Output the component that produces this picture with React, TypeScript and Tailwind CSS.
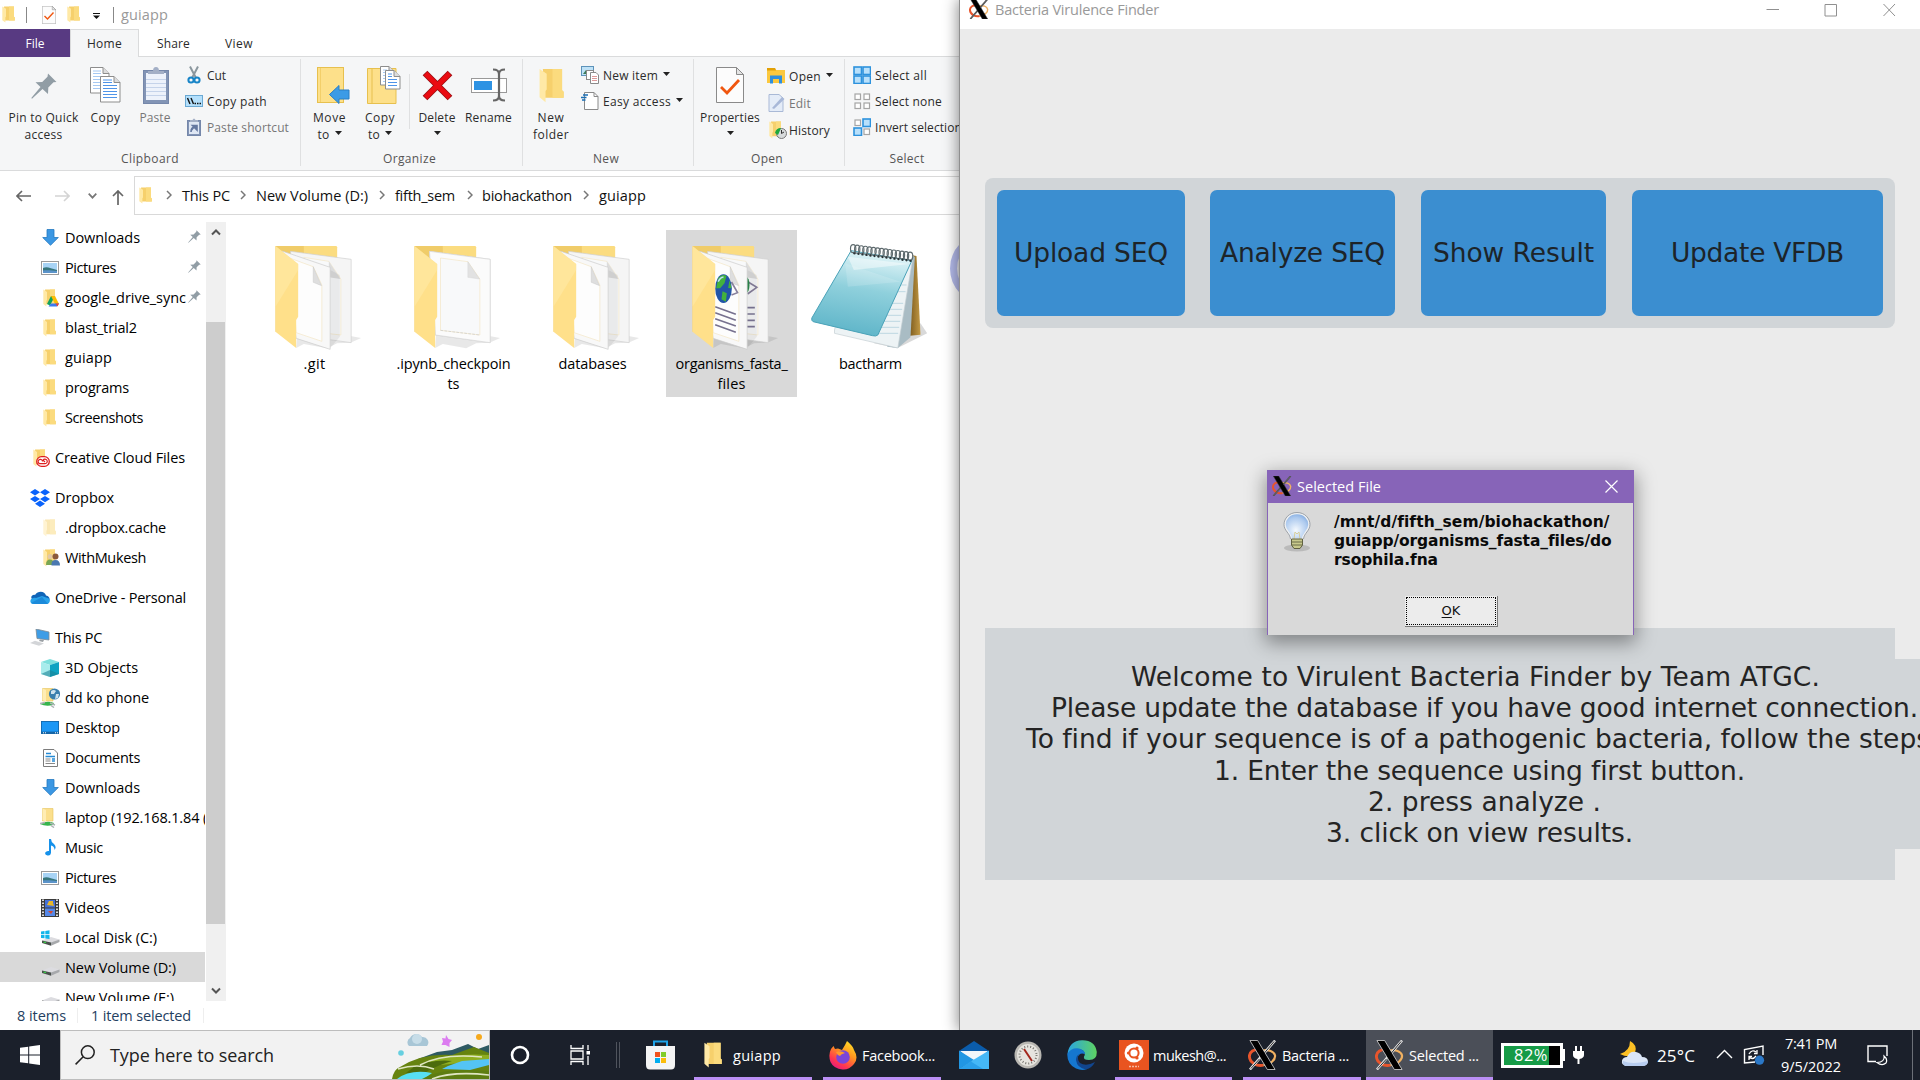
import { useLayoutEffect, useRef, useState, type ReactNode } from "react";

/* Text set to an exact advance width by adjusting its tracking. */
function T({ w, children, className = "" }: { w: number; children: string; className?: string }) {
  const ref = useRef<HTMLSpanElement>(null);
  const [ls, setLs] = useState(0);
  useLayoutEffect(() => {
    const el = ref.current;
    if (!el) return;
    const natural = el.getBoundingClientRect().width - ls * children.length;
    setLs((w - natural) / children.length);
  }, [w, children]);
  return (
    <span ref={ref} className={"inline-block shrink-0 whitespace-pre " + className} style={{ letterSpacing: ls + "px" }}>
      {children}
    </span>
  );
}

/* ---------- shared icons ---------- */
function Folder({ className = "w-[13px] h-[18px]" }: { className?: string }) {
  return (
    <svg viewBox="0 0 13 18" className={className} preserveAspectRatio="none">
      <path d="M2 0.5H12V11.5L12.8 12.2V15.3H3z" fill="#f6d06c" />
      <path d="M7 0.5H12V11.5L12.8 12.2V15.3H7z" fill="#fbdb7e" />
      <path d="M0.3 0.5L4 3V11l-.6.8V17.6L0.3 15z" fill="#ffe9a6" />
    </svg>
  );
}

function XLogo({ className, light = false }: { className: string; light?: boolean }) {
  return (
    <svg viewBox="0 0 30 30" className={className}>
      <path d="M14 10C6 8 1 12 1.500 17C2 23 9 27 16 25.500" fill="none" stroke="#e8552c" strokeWidth="3" />
      <path d="M16 25.500C23 25 28.500 20 28 15.500C27 11 21 9 15 10.500" fill="none" stroke="#f0b061" strokeWidth="2.200" />
      <path d="M28 0L2 30" stroke={light ? "#e4e4e4" : "#555"} strokeWidth="2.600" />
      <path d="M2 0H10L28 30H20z" fill="#000" stroke={light ? "#ddd" : "#333"} strokeWidth="0.800" />
      <path d="M27 1L17 13M12 19L3 29" stroke={light ? "#222" : "#666"} strokeWidth="1" />
    </svg>
  );
}

function Pin({ className }: { className: string }) {
  return (
    <svg viewBox="0 0 26 26" className={className}>
      <path d="M17 0.500L25.500 9L22.500 9.300L17.300 14.500L17 21L11.500 16L1 25.700L0.300 25L9.500 14L4.500 9.300L11.200 9L16.500 3.700z" fill="#919da5" />
    </svg>
  );
}

function Caret() {
  return <svg viewBox="0 0 7 4" className="w-[7px] h-[4px] shrink-0"><path d="M0 0H7L3.500 4z" fill="#222" /></svg>;
}

function Doc({ x = 0, y = 0, w = 19, h = 26, lines = "#4f94e8", faded = false }: { x?: number; y?: number; w?: number; h?: number; lines?: string; faded?: boolean }) {
  const rows = [];
  for (let i = 9; i < h - 2; i += 3) rows.push(i);
  return (
    <g transform={`translate(${x} ${y})`}>
      <path d={`M.5 .5H${w - 6}L${w} 6.500V${h}H.5z`} fill="#fff" stroke="#8d8d8d" />
      <path d={`M${w - 6} .5V6.500H${w}`} fill="#ddd" stroke="#8d8d8d" />
      <path d={`M3 4h${w - 11}M3 6.500h${w - 11}`} stroke={lines} opacity={faded ? 0.5 : 1} />
      {rows.map((r) => <path key={r} d={`M3 ${r + 0.5}h${w - 6}`} stroke={lines} opacity={faded ? 0.5 : 1} />)}
    </g>
  );
}

const PropsIcon = ({ className }: { className: string }) => (
  <svg viewBox="0 0 28 36" className={className}>
    <path d="M.5 .5H20.500L27.500 7.500V35.500H.5z" fill="#fcfcfc" stroke="#8a8a8a" />
    <path d="M20.500 .5V7.500H27.500z" fill="#e4e4e4" stroke="#8a8a8a" />
    <path d="M5 20L11 26L23 13" fill="none" stroke="#f0560f" strokeWidth="2.800" />
  </svg>
);

const Picture = () => (
  <svg viewBox="0 0 18 14" className="w-[18px] h-[14px]">
    <rect x=".5" y=".5" width="17" height="13" fill="#fff" stroke="#9a9a9a" />
    <rect x="2" y="2" width="14" height="10" fill="#a7d3f5" />
    <path d="M2 7C6 5 9 7 16 9V12H2z" fill="#37767c" /><path d="M2 9.500C6 9 12 9.500 16 10V12H2z" fill="#5b93c9" />
  </svg>
);
const DownArrow = () => (
  <svg viewBox="0 0 17 17" className="w-[17px] h-[17px]"><path d="M5 .5H12V8.500H16.300L8.500 16.300L.7 8.500H5z" fill="#3b97e3" stroke="#2479c0" strokeWidth=".8" /></svg>
);
const Cloud = () => (
  <svg viewBox="0 0 20 14" className="w-5 h-[14px]"><path d="M3 9C-1 6 3 3 5 4C8-1 15 0 16 4.500C20 5 20 9 19 10z" fill="#0f64b8" /><path d="M1 12C-1 9 2 6 6 7L12 5L19 7.500C21 10 19 13 17 13H4C2 13 1.500 12.500 1 12z" fill="#28a2ea" /><path d="M1 12L12 6L18 13H4z" fill="#1b8ada" /></svg>
);
const Drive = ({ win = false }: { win?: boolean }) => (
  <svg viewBox="0 0 19 16" className="w-[19px] h-4">
    <path d="M1 10.500L10 7L18.500 9.500L10 13.500z" fill="#dcdce0" /><path d="M1 10.500L10 12.500V15.700L1 13z" fill="#4a504c" /><path d="M10 12.500L18.500 9.500V12L10 15.700z" fill="#a7a9ac" /><path d="M2.500 12L5 12.600" stroke="#36d346" strokeWidth="1.200" />
    {win && <path d="M0 1.500L3.500 1V4.300H0zM4.300 .9L8.500 .2V4.300H4.300zM0 5.100H3.500V8.300L0 7.900zM4.300 5.100H8.500V9L4.300 8.400z" fill="#11b5ea" />}
  </svg>
);
const NetFolder = ({ globe = false }: { globe?: boolean }) => (
  <svg viewBox="0 0 20 20" className="w-5 h-5">
    <path d="M2.500 .5H13V13H2.500z" fill="#fbdf8c" stroke="#e6c35b" strokeWidth=".6" /><path d="M2.500 .5L6 2V14L2.500 12z" fill="#ffedb4" />
    {globe && <><circle cx="14.500" cy="6" r="5.600" fill="#3a7fae" /><path d="M11 3Q14 1 16 3L14 6L11 6zM16 6l3 0l-1 4l-3 1z" fill="#cfe3ee" /></>}
    <path d="M0 16Q7 12 14 15L13 17Q6 19 0 16z" fill="#36b54d" /><path d="M0 15.500l5 -1M11 17.500l3 2M10 15l5 2" stroke="#aeb3b5" strokeWidth="1.500" />
  </svg>
);

const sideIcons: Record<string, ReactNode> = {
  down: <DownArrow />,
  pic: <Picture />,
  folder: <Folder className="mr-[2px] w-[13px] h-[18px]" />,
  pale: <Folder className="mr-[2px] w-[13px] h-[18px] opacity-50" />,
  gdrive: (
    <div className="relative mr-[2px]"><Folder />
      <svg viewBox="0 0 12 11" className="absolute left-[4px] top-[7px] w-3 h-[11px]"><path d="M4 0H8L3 9.500L0 8z" fill="#11a35d" /><path d="M4 0H8L12 8H8z" fill="#fbbc05" /><path d="M1.500 10.500L4 7.500H12L10 10.500z" fill="#3a7af0" /><path d="M8.500 7.500H12L10.500 10.500z" fill="#ea4335" /></svg>
    </div>
  ),
  cc: (
    <div className="relative mr-[2px]"><Folder />
      <svg viewBox="0 0 14 11" className="absolute left-[3px] top-[7px] w-[14px] h-[11px]"><rect x=".7" y=".7" width="12.600" height="9.600" rx="4.800" fill="#fff" stroke="#dd1f1f" strokeWidth="1.300" /><path d="M6.500 5.500a2.200 2.200 0 1 0-2 2.200H9a2.300 2.300 0 1 0-2-3.500L9 6" fill="none" stroke="#dd1f1f" strokeWidth="1.200" /></svg>
    </div>
  ),
  dropbox: (
    <svg viewBox="0 0 20 18" className="w-5 h-[18px]"><path d="M5 0L10 3.200L5 6.400L0 3.200zM15 0L20 3.200L15 6.400L10 3.200zM5 6.900L10 10.100L5 13.300L0 10.100zM15 6.900L20 10.100L15 13.300L10 10.100zM10 11.600L15 14.700L10 18L5 14.700z" fill="#0a63fb" /></svg>
  ),
  people: (
    <div className="relative mr-[2px]"><Folder />
      <svg viewBox="0 0 14 13" className="absolute left-[3px] top-[4px] w-[14px] h-[13px]"><circle cx="4" cy="3.500" r="2.500" fill="#e2c9a5" /><path d="M0 12Q0 6.500 4 6.500T8 12z" fill="#79a653" /><circle cx="9.500" cy="3.500" r="3" fill="#8a5a3c" /><path d="M5.500 12.500Q5 7 9.500 7T14 12.500z" fill="#4a78b0" /></svg>
    </div>
  ),
  onedrive: <Cloud />,
  pc: (
    <svg viewBox="0 0 20 17" className="w-5 h-[17px]"><path d="M6 0L19 3V11L7 9.500z" fill="#3e9de6" stroke="#808a92" strokeWidth=".8" /><path d="M10 10.500L14 11L13 13L9 12z" fill="#9ba0a4" /><path d="M0 14L5 11.800L14 14.500L9 16.800z" fill="#d3d5d8" /></svg>
  ),
  cube: (
    <svg viewBox="0 0 18 18" className="w-[18px] h-[18px]"><path d="M0 3L9 0L18 3L9 6z" fill="#7fe0dd" /><path d="M0 3L9 6V18L0 15z" fill="#a8ecec" /><path d="M18 3L9 6V18L18 15z" fill="#0fa3c2" /><path d="M0 15L9 11L18 15L9 18z" fill="#1a8295" opacity=".6" /></svg>
  ),
  netglobe: <NetFolder globe />,
  net: <NetFolder />,
  desktop: <svg viewBox="0 0 18 13" className="w-[18px] h-[13px]"><rect width="18" height="13" fill="#1565a6" /><rect x=".8" y=".8" width="16.400" height="9.800" fill="#1c97f5" /><path d="M2 11.800H6M14 11.800H17" stroke="#fff" strokeDasharray="1 1" /></svg>,
  docs: <svg viewBox="0 0 15 18" className="w-[15px] h-[18px]"><path d="M.5 .5H11L14.500 4V17.500H.5z" fill="#fff" stroke="#7c7c7c" /><path d="M3 4.500H8M2.500 7.500H12M9 10H12M9 12H12" stroke="#268ad4" strokeWidth="1.300" /><path d="M2.500 10H7.500M2.500 12H7.500M2.500 14.500H12" stroke="#888" /></svg>,
  music: <svg viewBox="0 0 11 17" className="w-[11px] h-[17px]"><path d="M4 0H6Q6 3 9 5Q12 8 9.500 11Q9.500 7 6 6.500V14Q5.500 17 2.500 16.500Q-.5 16 .3 13.500Q1.500 11.500 4 12z" fill="#1691ea" /></svg>,
  video: <svg viewBox="0 0 18 18" className="w-[18px] h-[18px]"><rect width="18" height="18" fill="#3b3b3b" /><rect x="4" y="1" width="10" height="7.500" fill="#4471d8" /><rect x="4" y="9.500" width="10" height="7.500" fill="#5588e8" /><path d="M6 6L8 2H12V4L13 7z" fill="#e8b72b" /><path d="M7 12H12L10 15z" fill="#d34830" /><path d="M2 .5V18M16 .5V18" stroke="#eee" strokeWidth="1.800" strokeDasharray="1.500 1.500" /></svg>,
  winDrive: <Drive win />,
  drive: <Drive />,
};

type Row = { l: string; w: number; i: string; lv?: number; pin?: boolean; gap?: boolean; sel?: boolean };
const rows: Row[] = [
  { l: "Downloads", w: 75, i: "down", pin: true },
  { l: "Pictures", w: 51, i: "pic", pin: true },
  { l: "google_drive_sync", w: 121, i: "gdrive", pin: true },
  { l: "blast_trial2", w: 72, i: "folder" },
  { l: "guiapp", w: 47, i: "folder" },
  { l: "programs", w: 64, i: "folder" },
  { l: "Screenshots", w: 78, i: "folder" },
  { l: "Creative Cloud Files", w: 130, i: "cc", lv: 1, gap: true },
  { l: "Dropbox", w: 59, i: "dropbox", lv: 1, gap: true },
  { l: ".dropbox.cache", w: 101, i: "pale" },
  { l: "WithMukesh", w: 81, i: "people" },
  { l: "OneDrive - Personal", w: 131, i: "onedrive", lv: 1, gap: true },
  { l: "This PC", w: 47, i: "pc", lv: 1, gap: true },
  { l: "3D Objects", w: 73, i: "cube" },
  { l: "dd ko phone", w: 84, i: "netglobe" },
  { l: "Desktop", w: 55, i: "desktop" },
  { l: "Documents", w: 75, i: "docs" },
  { l: "Downloads", w: 75, i: "down" },
  { l: "laptop (192.168.1.84 (", w: 142, i: "net" },
  { l: "Music", w: 38, i: "music" },
  { l: "Pictures", w: 51, i: "pic" },
  { l: "Videos", w: 45, i: "video" },
  { l: "Local Disk (C:)", w: 92, i: "winDrive" },
  { l: "New Volume (D:)", w: 111, i: "drive", sel: true },
  { l: "New Volume (E:)", w: 109, i: "drive" },
];

/* ---------- ribbon ---------- */
function Big({ width, icon, lines, caret = false, dim = false }: { width: string; icon: ReactNode; lines: [string, number][]; caret?: boolean; dim?: boolean }) {
  return (
    <div className={"flex shrink-0 flex-col items-center pt-[9px] " + width + (dim ? " text-[#777]" : "")}>
      <div className="flex h-[38px] items-center justify-center">{icon}</div>
      <div className="mt-[5px] flex flex-col items-center">
        {lines.map(([t, w], i) => (
          <div key={t} className="flex h-[17px] items-center gap-[5px]">
            <T w={w}>{t}</T>
            {caret && lines.length > 1 && i === 1 && <span className="-mt-[3px]"><Caret /></span>}
          </div>
        ))}
        {caret && lines.length === 1 && <div className="flex h-[13px] items-center"><Caret /></div>}
      </div>
    </div>
  );
}

function Small({ icon, t, w, caret = false, dim = false, h = "h-[26px]" }: { icon: ReactNode; t: string; w: number; caret?: boolean; dim?: boolean; h?: string }) {
  return (
    <div className={"flex items-center " + h + (dim ? " text-[#777]" : "")}>
      <div className="-mt-px flex w-[18px] shrink-0 items-center justify-center">{icon}</div>
      <T w={w} className="ml-[4px] mr-[5px]">{t}</T>
      {caret && <span className="-mt-[3px]"><Caret /></span>}
    </div>
  );
}

function Group({ width, label, lw, children, last = false, labelPad = "" }: { width: string; label: string; lw: number; children: ReactNode; last?: boolean; labelPad?: string }) {
  return (
    <div className={"mt-[2px] flex h-[107px] shrink-0 flex-col " + width + (last ? "" : " border-r border-[#dfe0e1]")}>
      <div className="-mt-[2px] flex h-[94px] shrink-0">{children}</div>
      <div className={"flex h-[15px] shrink-0 items-center justify-center text-[#555] " + labelPad}><T w={lw}>{label}</T></div>
    </div>
  );
}

const cells = (on: boolean[]) => (
  <svg viewBox="0 0 18 18" className="w-[18px] h-[18px]">
    {on.map((b, i) => (
      <rect key={i} x={(i % 2) * 9 + (b ? 1 : 2)} y={Math.floor(i / 2) * 9 + (b ? 1 : 2)} width={b ? 7.500 : 5.500} height={b ? 7.500 : 5.500} fill={b ? "#b8e0fb" : "#fff"} stroke={b ? "#2d92dd" : "#a5a5a5"} strokeWidth={b ? 1.600 : 1.200} />
    ))}
  </svg>
);

const copyIcon = (
  <svg viewBox="0 0 31 37" className="w-[31px] h-[37px]"><Doc w={19} h={26} faded /><Doc x={10} y={9} w={20} h={26} /></svg>
);
const pasteIcon = (
  <svg viewBox="0 0 26 37" className="ml-[2px] w-[26px] h-[37px]">
    <rect x=".5" y="3.500" width="25" height="33" fill="#8294b5" stroke="#7587aa" /><rect x="3" y="6" width="20" height="27" fill="#edf2fb" />
    <path d="M3 12.500H23M3 16.500H23M3 20.500H23M3 24.500H23M3 28.500H23" stroke="#c5d3ea" /><path d="M5 7V4H10Q10 0 13 0T16 4H21V7z" fill="#a3afc6" />
  </svg>
);

function Ribbon() {
  return (
    <div className="flex h-[114px] w-full shrink-0 overflow-hidden border-b border-[#dadbdc] bg-[#f5f6f7] text-[12px] text-[#2b2b2b]">
      <Group width="w-[301px]" label="Clipboard" lw={58}>
        <Big width="w-[87px]" icon={<Pin className="mt-[2px] w-[26px] h-[26px]" />} lines={[["Pin to Quick", 70], ["access", 38]]} />
        <Big width="w-[37px]" icon={copyIcon} lines={[["Copy", 30]]} />
        <Big width="w-[62px]" icon={pasteIcon} lines={[["Paste", 31]]} dim />
        <div className="-ml-px flex flex-col pt-[5.500px]">
          <Small t="Cut" w={19} icon={<svg viewBox="0 0 14 18" className="w-[14px] h-[18px]"><path d="M3 .5L9 12M11 .5L5 12" stroke="#8b979e" strokeWidth="2" /><circle cx="4" cy="14" r="2.600" fill="none" stroke="#1784c7" strokeWidth="2" /><circle cx="10" cy="14" r="2.600" fill="none" stroke="#1784c7" strokeWidth="2" /></svg>} />
          <Small t="Copy path" w={60} icon={<svg viewBox="0 0 18 12" className="w-[18px] h-3"><rect x=".5" y=".5" width="17" height="11" fill="#b4e0fc" stroke="#6ba9d3" /><path d="M2.500 3L5 9M6 3L8.500 9" stroke="#111" strokeWidth="1.400" /><path d="M9.500 8.500H16" stroke="#111" strokeWidth="1.500" strokeDasharray="1.500 1" /></svg>} />
          <Small t="Paste shortcut" w={82} dim icon={<svg viewBox="0 0 14 18" className="w-[14px] h-[18px]"><rect x=".5" y="2.500" width="13" height="15" fill="#8294b5" stroke="#7587aa" /><rect x="2" y="4" width="10" height="12" fill="#dfe7f4" /><path d="M3 4V2H5.500Q7-1 8.500 2H11V4z" fill="#a3afc6" /><path d="M4 14Q4 9 8 9M5.500 7.500H10V12z" stroke="#6478a0" strokeWidth="1.600" fill="#6478a0" /></svg>} />
        </div>
      </Group>
      <Group width="w-[222px]" label="Organize" lw={53} labelPad="pr-[4px]">
        <Big width="w-[57px]" caret lines={[["Move", 33], ["to", 12]]} icon={<svg viewBox="0 0 33 37" className="ml-[8px] w-[33px] h-[37px]"><rect x=".5" y=".5" width="26" height="35" fill="#fde08a" stroke="#e7c04e" /><path d="M3.500 1V35" stroke="#f3cf6a" /><path d="M12.500 27.500L22 18.500V23H32V32H22V36.500z" fill="#3c9be6" stroke="#2a7ec4" /></svg>} />
        <Big width="w-[44px]" caret lines={[["Copy", 30], ["to", 12]]} icon={<svg viewBox="0 0 34 38" className="ml-[7px] w-[34px] h-[38px]"><path d="M.5 2.500H14V37.500H.5z" fill="#fde08a" stroke="#e7c04e" /><path d="M5 2.500H29V37.500H5z" fill="#fde08a" stroke="#e7c04e" /><Doc x={13} y={0} w={15} h={19} faded /><Doc x={18} y={4} w={15} h={19} /></svg>} />
        <div className="ml-[7px] mt-[17px] h-[55px] w-px bg-[#dfe0e1]" />
        <Big width="w-[54px]" caret lines={[["Delete", 37]]} icon={<svg viewBox="0 0 31 31" className="w-[31px] h-[31px]"><path d="M3 3L28 28M28 3L3 28" stroke="#9c0f13" strokeWidth="6.600" /><path d="M3.500 3.500L27.500 27.500M27.500 3.500L3.500 27.500" stroke="#ea0b12" strokeWidth="4.800" /></svg>} />
        <Big width="w-[49px]" lines={[["Rename", 47]]} icon={<svg viewBox="0 0 36 34" className="w-9 h-[34px]"><rect x=".5" y="10.500" width="35" height="14" fill="#fff" stroke="#999" /><rect x="3" y="13" width="18" height="9" fill="#2d92e3" /><path d="M22 1.500Q28 1.500 28 6V28Q28 32.500 22 32.500M34 1.500Q28 1.500 28 6M28 28Q28 32.500 34 32.500" fill="none" stroke="#666" strokeWidth="2.200" /></svg>} />
      </Group>
      <Group width="w-[171px]" label="New" lw={26} labelPad="pr-[4px]">
        <Big width="w-[56px]" lines={[["New", 27], ["folder", 36]]} icon={<Folder className="w-[25px] h-[35px]" />} />
        <div className="flex flex-col pt-[5.500px] pl-[2px]">
          <Small t="New item" w={55} caret icon={<svg viewBox="0 0 18 18" className="w-[18px] h-[18px]"><rect x=".5" y=".5" width="12" height="9" fill="#bfe2f7" stroke="#5d93ba" /><path d="M2 8L5 4L9 8z" fill="#3c7b58" /><rect x="5.500" y="4.500" width="7" height="9" fill="#fff" stroke="#8a8a8a" /><path d="M9.500 6.500H15L17.500 9V17.500H9.500z" fill="#fff" stroke="#8a8a8a" /><path d="M11 10.500H16M11 12.500H16M11 14.500H16" stroke="#d99" /></svg>} />
          <Small t="Easy access" w={68} caret icon={<svg viewBox="0 0 18 18" className="w-[18px] h-[18px]"><path d="M3.500 .5H13L17 4.500V17.500H3.500z" fill="#fff" stroke="#8a8a8a" /><path d="M13 .5V4.500H17" fill="none" stroke="#8a8a8a" /><path d="M2 3H7M0 5.500H5.500M1 8H4.500" stroke="#1b6fb5" strokeWidth="1.300" /></svg>} />
        </div>
      </Group>
      <Group width="w-[151px]" label="Open" lw={32} labelPad="pr-[4px]">
        <Big width="w-[72px]" caret lines={[["Properties", 60]]} icon={<PropsIcon className="w-7 h-9" />} />
        <div className="flex flex-col pt-[6px] pl-[1px]">
          <Small h="h-[27px]" t="Open" w={32} caret icon={<svg viewBox="0 0 18 16" className="w-[18px] h-4"><path d="M0 0H8L9 2H18V15H0z" fill="#fbc83e" /><path d="M0 0H8L9 2.500H0z" fill="#e2a006" /><path d="M3 15.500V7.500H15V15.500H12V11H6V15.500z" fill="#2f8fdd" /></svg>} />
          <Small h="h-[27px]" t="Edit" w={22} dim icon={<svg viewBox="0 0 17 18" className="w-[17px] h-[18px]"><path d="M1 .5H11L15 4V17.500H1z" fill="#e4ecf8" stroke="#a9b9d6" /><path d="M4 14L14 3L16.500 5L6 15z" fill="#a8b8d8" /></svg>} />
          <Small h="h-[27px]" t="History" w={41} icon={<div className="relative mr-[2px]"><Folder className="w-[13px] h-[18px]" /><svg viewBox="0 0 12 12" className="absolute left-[6px] top-[6px] w-3 h-3"><circle cx="6.500" cy="6.500" r="5" fill="#d7dadb" stroke="#777" /><path d="M6.500 3V6.500L9 5" stroke="#333" fill="none" /><path d="M0 6Q1 1 6 1L5 3.500L3 8z" fill="#1da83c" /></svg></div>} />
        </div>
      </Group>
      <Group width="w-[125px]" label="Select" lw={35} last labelPad="pr-[1px]">
        <div className="flex flex-col pt-[5.500px] pl-[8px]">
          <Small t="Select all" w={52} icon={cells([true, true, true, true])} />
          <Small t="Select none" w={67} icon={cells([false, false, false, false])} />
          <Small t="Invert selection" w={87} icon={cells([false, true, true, false])} />
        </div>
      </Group>
    </div>
  );
}

const Chev = ({ className = "" }: { className?: string }) => (
  <svg viewBox="0 0 6 10" className={"h-[10px] w-[6px] shrink-0 " + className}><path d="M1 1L5 5L1 9" fill="none" stroke="#777" strokeWidth="1.500" /></svg>
);

/* ---------- large file icons ---------- */
const folderBack = <><path d="M75 78H185V350L75 335z" fill="#f0cc69" /><path d="M160 78H258L260 82V140H160z" fill="#fbdc80" /></>;
const folderFront = <><path d="M75 78L143 132V290L137 300V384L75 335z" fill="#ffe08a" /><path d="M75 78L143 132V150L75 260z" fill="#ffeaa6" opacity=".6" /></>;
const shadowTail = <path d="M137 384L160 372L230 385L260 370L300 368L332 354L300 348L140 340z" fill="#000" opacity=".09" />;

function BigFolder({ kind }: { kind: "two" | "one" | "web" }) {
  return (
    <svg viewBox="43.500 60 300 342" className="h-[114px] w-[100px]">
      {shadowTail}{folderBack}
      <path d="M120 94L302 118V368L137 345z" fill="#f5f5f5" stroke="#cfcfcf" strokeWidth="2" />
      {kind === "one" ? (
        <><path d="M120 94L302 118V368L138 345z" fill="#fbfbfb" stroke="#d6d6d6" strokeWidth="2" />
          <path d="M153 114L235 125L271 177V345L153 331z" fill="#f8f9fa" stroke="#f3e6c4" strokeWidth="2" />
          <path d="M153 331L271 345" stroke="#c9c9c9" strokeWidth="2" strokeDasharray="8 4" />
          <path d="M235 125V172L270 177z" fill="#e2e2e2" stroke="#ccc" /></>
      ) : (
        <>
          <path d="M160 112L235 124L271 177V345L150 331z" fill="#f8f9fa" stroke="#f3e6c4" strokeWidth="2" />
          <path d="M235 124V172L270 177z" fill="#dcdcdc" />
          {kind === "web" && <><path d="M232 180L268 202L240 222" fill="none" stroke="#88809c" strokeWidth="5" /><ellipse cx="236" cy="195" rx="10" ry="24" fill="#2d8a4d" /><path d="M238 263H262M238 282H262M238 301H262M238 320H262" stroke="#7d7896" strokeWidth="5" /></>}
          <path d="M239 150V385L268 350V165z" fill="#000" opacity=".06" />
          <path d="M95 93L239 142V388L137 355z" fill="#f8f8f8" stroke="#cacaca" strokeWidth="2" />
          <path d="M120 115L188 140L214 195V364L137 338z" fill="#fdfdfd" stroke="#f3e6c4" strokeWidth="2" />
          <path d="M188 140V187L213 197z" fill="#dedede" stroke="#bdbdbd" />
          {kind === "web" && (
            <>
              <path d="M192 186L210 218L192 225" fill="none" stroke="#88809c" strokeWidth="5" />
              <ellipse cx="168" cy="206" rx="25" ry="43" fill="#2255a8" />
              <path d="M152 175Q165 160 177 168L171 190L158 205L146 205zM165 214L178 220L175 245L162 238zM186 180L192 205L182 204z" fill="#43b23c" />
              <path d="M152 185Q160 170 168 172" stroke="#bde0f5" strokeWidth="5" fill="none" />
              <path d="M143 260L205 283M143 278L205 301M143 296L205 318M143 314L205 337" stroke="#77718f" strokeWidth="5" />
            </>
          )}
        </>
      )}
      {folderFront}
    </svg>
  );
}

function Notepad() {
  return (
    <svg viewBox="511.500 60 360 342" className="h-[114px] w-[120px]">
      <defs>
        <linearGradient id="np" x1="0.600" y1="0" x2="0.400" y2="1"><stop offset="0" stopColor="#e4f6f9" /><stop offset=".45" stopColor="#8fd0dc" /><stop offset="1" stopColor="#5db4c8" /></linearGradient>
        <linearGradient id="wd" x1="0" x2="1"><stop offset="0" stopColor="#6d4d16" /><stop offset="1" stopColor="#c39a45" /></linearGradient>
      </defs>
      <path d="M770 385L860 340L840 310L700 370z" fill="#000" opacity=".15" />
      <path d="M815 106L828 108L840 344L800 348z" fill="url(#wd)" />
      <path d="M816 105L823 112L810 352L772 384L740 380z" fill="#a9bcc4" />
      <path d="M640 100L816 120L772 384L582 340V330z" fill="#edf3f5" stroke="#c3cdd1" strokeWidth="2" />
      <path d="M745 250H788M735 268H785M727 286H782M720 304H779M718 322H776M716 340H773M760 215H795M768 195H798" stroke="#b5d3df" strokeWidth="2.500" />
      <path d="M632 92L814 122L712 345Q706 350 696 347L518 305Q512 302 514 294z" fill="url(#np)" stroke="#4aa2b8" strokeWidth="3" />
      <path d="M622 110L806 132L640 150z" fill="#fff" opacity=".45" /><path d="M614 130L780 185L622 200z" fill="#fff" opacity=".15" />
      {Array.from({ length: 15 }, (_, i) => (
        <g key={i}><ellipse cx={638 + i * 12.200} cy={86 + i * 1.600} rx="8" ry="12" fill="none" stroke="#5e6a6e" strokeWidth="3.500" /><circle cx={642 + i * 12} cy={100 + i * 1.600} r="3.500" fill="#2b3437" /></g>
      ))}
    </svg>
  );
}

const files: { lines: [string, number][]; icon: ReactNode; sel?: boolean }[] = [
  { lines: [[".git", 22]], icon: <BigFolder kind="two" /> },
  { lines: [[".ipynb_checkpoin", 114], ["ts", 12]], icon: <BigFolder kind="one" /> },
  { lines: [["databases", 68]], icon: <BigFolder kind="two" /> },
  { lines: [["organisms_fasta_", 112], ["files", 28]], icon: <BigFolder kind="web" />, sel: true },
  { lines: [["bactharm", 63]], icon: <Notepad /> },
];

function Explorer() {
  return (
    <div className="flex h-[1030px] w-[960px] shrink-0 flex-col overflow-hidden bg-white text-[14.500px] text-black">
      <div className="flex h-[29px] shrink-0 items-center pl-[2px]">
        <Folder className="w-[13px] h-[17px]" />
        <div className="ml-[11px] h-[16px] w-px bg-[#888]" />
        <PropsIcon className="ml-[15px] mt-[1px] h-[18px] w-[14px]" />
        <Folder className="ml-[11px] w-[13px] h-[17px]" />
        <svg viewBox="0 0 7 6" className="ml-[13px] mt-[2px] h-[6px] w-[7px]"><path d="M0 .5H7" stroke="#111" /><path d="M0 2.500H7L3.500 6z" fill="#111" /></svg>
        <div className="ml-[13px] h-[16px] w-px bg-[#888]" />
        <T w={47} className="ml-[7px] text-[#999]">guiapp</T>
      </div>
      <div className="flex h-[28px] shrink-0 text-[12px] text-[#2b2b2b]">
        <div className="flex w-[70px] items-center justify-center bg-[#583a82] pt-px text-white"><T w={19}>File</T></div>
        <div className="flex w-[69px] items-center justify-center border-x border-t border-[#dadbdc] bg-[#f5f6f7]"><T w={35}>Home</T></div>
        <div className="flex flex-1 items-center border-b border-[#dadbdc] pl-[18px] pt-[2px]"><T w={33}>Share</T><T w={28} className="ml-[35px]">View</T></div>
      </div>
      <Ribbon />
      <div className="flex h-[44px] shrink-0 items-start">
        <div className="flex h-[44px] w-[134px] items-center pt-[6px] pl-4">
          <svg viewBox="0 0 15 12" className="h-3 w-[15px]"><path d="M15 6H1M6 1L1 6L6 11" fill="none" stroke="#666" strokeWidth="1.600" /></svg>
          <svg viewBox="0 0 15 12" className="ml-6 h-3 w-[15px]"><path d="M0 6H14M9 1L14 6L9 11" fill="none" stroke="#d4d4d4" strokeWidth="1.600" /></svg>
          <svg viewBox="0 0 9 6" className="ml-[18px] h-[6px] w-[9px]"><path d="M.7 .7L4.500 4.700L8.300 .7" fill="none" stroke="#777" strokeWidth="1.700" /></svg>
          <svg viewBox="0 0 12 15" className="ml-[15px] mt-[2px] h-[15px] w-3"><path d="M6 15V1M1 6L6 1L11 6" fill="none" stroke="#666" strokeWidth="1.700" /></svg>
        </div>
        <div className="mt-[5px] flex h-[39px] flex-1 items-center border-y border-l border-[#d9d9d9] pl-[4px] text-[#111]">
          <Folder className="h-[17px] w-[13px]" />
          <Chev className="ml-[14px] -mt-px" /><T w={48} className="ml-[10px]">This PC</T>
          <Chev className="ml-[10px] -mt-px" /><T w={112} className="ml-[10px]">New Volume (D:)</T>
          <Chev className="ml-[11px] -mt-px" /><T w={60} className="ml-[10px]">fifth_sem</T>
          <Chev className="ml-[12px] -mt-px" /><T w={90} className="ml-[9px]">biohackathon</T>
          <Chev className="ml-[11px] -mt-px" /><T w={47} className="ml-[10px]">guiapp</T>
        </div>
      </div>
      <div className="flex h-[786px] shrink-0">
        <div className="flex h-[786px] w-[205px] shrink-0 flex-col overflow-hidden pt-[7px]">
          {rows.map((r, i) => (
            <div key={i} className={"flex h-[30px] w-[205px] shrink-0 items-center overflow-hidden pt-px " + (r.lv ? "pl-[28px] " : "pl-[38px] ") + (r.gap ? "mt-[10px] " : "") + (r.sel ? "bg-[#d9d9d9]" : "")}>
              <div className="flex w-6 shrink-0 items-center justify-center">{sideIcons[r.i]}</div>
              <div className={"ml-[3px] flex shrink-0 pt-px " + (r.pin ? "w-[120px]" : "")}><T w={r.w}>{r.l}</T></div>
              {r.pin && <Pin className="ml-[3px] -mt-[2px] h-[13px] w-[13px] shrink-0" />}
            </div>
          ))}
        </div>
        <div className="ml-[1px] mt-[7px] flex w-[20px] flex-col items-center bg-[#f0f0f0]">
          <svg viewBox="0 0 10 7" className="mr-px mt-[7px] h-[7px] w-[10px]"><path d="M1 5.500L5 1.500L9 5.500" fill="none" stroke="#555" strokeWidth="2" /></svg>
          <div className="mr-[1px] mt-[86px] h-[602px] w-[19px] bg-[#cdcdcd]" />
          <svg viewBox="0 0 10 7" className="mr-px mt-[63px] h-[7px] w-[10px]"><path d="M1 1.500L5 5.500L9 1.500" fill="none" stroke="#555" strokeWidth="2" /></svg>
        </div>
        <div className="ml-[2px] w-px bg-[#f2f2f2]" />
        <div className="ml-[21px] mt-[15px] flex items-start gap-2">
          {files.map((f) => (
            <div key={f.lines[0][0]} className={"flex w-[131px] shrink-0 flex-col items-center pt-[10px] " + (f.sel ? "h-[167px] bg-[#d9d9d9]" : "")}>
              {f.icon}
              <div className="flex flex-col items-center">
                {f.lines.map(([t, w]) => <div key={t} className="flex h-5 items-center"><T w={w}>{t}</T></div>)}
              </div>
            </div>
          ))}
          <svg viewBox="0 0 71 71" className="ml-[6px] mt-[3px] h-[71px] w-[71px] shrink-0"><circle cx="35.500" cy="35.500" r="32" fill="#e8e8ec" stroke="#b4baea" strokeWidth="7" /></svg>
        </div>
      </div>
      <div className="flex h-[29px] items-center pl-[17px] text-[#24405f]">
        <T w={49}>8 items</T>
        <div className="ml-[11px] h-[15px] w-px bg-[#eee]" />
        <T w={100} className="ml-[13px]">1 item selected</T>
        <div className="ml-[12px] h-[15px] w-px bg-[#eee]" />
      </div>
    </div>
  );
}

/* ---------- virulence finder window ---------- */
const dj = "font-['DejaVu_Sans',sans-serif]";
const buttons = [
  { t: "Upload SEQ", w: 154, c: "w-[188px]" },
  { t: "Analyze SEQ", w: 165, c: "ml-[25px] w-[185px]" },
  { t: "Show Result", w: 161, c: "ml-[26px] w-[185px]" },
  { t: "Update VFDB", w: 173, c: "ml-[26px] w-[251px]" },
];
const msg: { t: string; w: number; c: string }[] = [
  { t: "Welcome to Virulent Bacteria Finder by Team ATGC.", w: 689, c: "pl-[146px]" },
  { t: "Please update the database if you have good internet connection.", w: 867, c: "pl-[66px]" },
  { t: "To find if your sequence is of a pathogenic bacteria, follow the steps", w: 904, c: "pl-[41px]" },
  { t: "1. Enter the sequence using first button.", w: 531, c: "pl-[229px]" },
  { t: "2. press analyze .", w: 233, c: "pl-[383px]" },
  { t: "3. click on view results.", w: 307, c: "pl-[341px]" },
];

function Finder() {
  return (
    <div className="z-10 flex h-[1030px] w-[961px] shrink-0 flex-col overflow-hidden border-l border-[#8f8f8f] bg-[#ebebeb]">
      <div className="flex h-[29px] shrink-0 items-start bg-white text-[#999]">
        <XLogo className="ml-[9px] -mt-px h-[20px] w-[20px]" />
        <T w={164} className="ml-[6px] text-[14.500px] leading-5">Bacteria Virulence Finder</T>
        <svg viewBox="0 0 130 14" className="ml-auto mr-[24px] mt-[3px] h-[14px] w-[130px]">
          <path d="M.5 6.500H13M59 1.500H70.500V13H59zM117.500 1L129 13M129 1L117.500 13" fill="none" stroke="#909090" />
        </svg>
      </div>
      <div className={"ml-[25px] mt-[149px] flex h-[150px] w-[910px] items-start rounded-[8px] bg-[#d1d5d8] pl-[12px] pt-[12px] text-[26.500px] text-[#1d2429] " + dj}>
        {buttons.map((b) => (
          <div key={b.t} className={"flex h-[126px] shrink-0 items-center justify-center rounded-[7px] bg-[#3b8ed0] " + b.c}><T w={b.w} className="-mt-px">{b.t}</T></div>
        ))}
      </div>
      <div className={"ml-[25px] mt-[300px] h-[252px] w-[910px] shrink-0 bg-[#d1d5d8] pt-[31px] text-[26.500px] text-[#242424] " + dj}>
        <div className="h-[190px] w-[935px] bg-[#d1d5d8] pt-[2px]">
          {msg.map((m) => <div key={m.t} className={"flex h-[31.300px] items-center " + m.c}><T w={m.w}>{m.t}</T></div>)}
        </div>
      </div>
    </div>
  );
}

function Dialog() {
  return (
    <div className="absolute left-[1267px] top-[470px] z-20 flex h-[165px] w-[367px] flex-col border-x border-[#8764b8] bg-[#d9d9d9] shadow-[0_6px_18px_2px_rgba(0,0,0,0.38)]">
      <div className="flex h-[33px] shrink-0 items-center bg-[#8764b8] text-[14.500px] text-white">
        <XLogo className="ml-[4px] -mt-px h-[20px] w-[20px]" />
        <T w={84} className="ml-[5px]">Selected File</T>
        <svg viewBox="0 0 13 13" className="ml-auto mr-[15px] h-[13px] w-[13px]"><path d="M.5 .5L12.500 12.500M12.500 .5L.5 12.500" stroke="#fff" strokeWidth="1.200" /></svg>
      </div>
      <div className="flex">
        <svg viewBox="0 0 28 40" className="ml-[15px] mt-[9px] h-10 w-7">
          <defs><radialGradient id="bulb" cx=".45" cy=".65" r=".7"><stop offset="0" stopColor="#f4f9fe" /><stop offset=".7" stopColor="#acc9ee" /><stop offset="1" stopColor="#7aa5dd" /></radialGradient></defs>
          <ellipse cx="14" cy="36" rx="13" ry="3.500" fill="#000" opacity=".14" />
          <path d="M14 1.500C6.500 1.500 2 7 2 12.500C2 18.500 8 21 8.500 27H19.500C20 21 26 18.500 26 12.500C26 7 21.500 1.500 14 1.500z" fill="url(#bulb)" stroke="#eef0f2" strokeWidth="1.500" />
          <path d="M14 .5C6 .5 1 6.500 1 12.500C1 19 7 21 7.500 27M14 .5C22 .5 27 6.500 27 12.500C27 19 21 21 20.500 27" fill="none" stroke="#8d939b" strokeWidth=".8" />
          <path d="M11 27L12 20L14 22L16 20L17 27" fill="none" stroke="#d8cf9c" />
          <path d="M8.500 27H19.500V33L17 36.500H11L8.500 33z" fill="#c8c98c" stroke="#5f6040" /><path d="M8.500 30H19.500M8.500 33H19.500" stroke="#6b6c48" />
        </svg>
        <div className={"ml-[23px] mt-[10px] flex flex-col text-[15.500px] font-bold text-[#0a0a0a] " + dj}>
          <div className="flex h-[19px] items-center"><T w={275}>/mnt/d/fifth_sem/biohackathon/</T></div>
          <div className="flex h-[19px] items-center"><T w={277}>guiapp/organisms_fasta_files/do</T></div>
          <div className="flex h-[19px] items-center"><T w={104}>rsophila.fna</T></div>
        </div>
      </div>
      <div className="ml-[137px] mt-[26px] flex h-[31px] w-[93px] shrink-0 items-center justify-center border-b border-r border-[#777] bg-[#ececec] p-[1px]">
        <div className={"flex h-full w-full items-center justify-center border border-dotted border-black text-[13px] text-[#111] " + dj}>
          <span className="underline underline-offset-2">O</span><span>K</span>
        </div>
      </div>
    </div>
  );
}

/* ---------- taskbar ---------- */
function Task({ width, icon, t, w, ml = "", active = false }: { width: string; icon: ReactNode; t: string; w: number; ml?: string; active?: boolean }) {
  return (
    <div className={"flex h-[50px] shrink-0 items-center border-b-[3px] border-[#bb8ff5] pt-[3px] " + width + " " + ml + (active ? " bg-[#4b4f58]" : "")}>
      {icon}
      <T w={w} className="mt-px">{t}</T>
    </div>
  );
}

function Taskbar() {
  return (
    <div className="flex h-[50px] w-[1920px] items-center overflow-hidden bg-[#1b202b] text-[14.500px] text-white">
      <div className="flex w-[60px] shrink-0 items-center justify-center">
        <svg viewBox="0 0 20 20" className="h-5 w-5"><path d="M0 2.800L8.200 1.700V9.500H0zM9.200 1.500L20 0V9.500H9.200zM0 10.500H8.200V18.300L0 17.200zM9.200 10.500H20V20L9.200 18.500z" fill="#fff" /></svg>
      </div>
      <div className="flex h-[50px] w-[430px] shrink-0 items-center border border-[#bdbdbd] bg-[#f2f2f2] pl-[14px] text-[18px] text-[#222]">
        <svg viewBox="0 0 20 20" className="h-5 w-5"><circle cx="12.800" cy="7.200" r="6.400" fill="none" stroke="#222" strokeWidth="1.500" /><path d="M8.200 11.800L.6 19.400" stroke="#222" strokeWidth="1.500" /></svg>
        <T w={164} className="ml-[15px]">Type here to search</T>
        <svg viewBox="0 0 97 46" className="ml-auto mt-[2px] h-[46px] w-[97px]">
          <path d="M17 13a5 5 0 0 1 1-8a7 7 0 0 1 12-1a5.500 5.500 0 0 1 5 9z" fill="#a8c6d6" /><circle cx="25" cy="6" r="5" fill="#c7dde8" />
          <path d="M54 2L56.500 6L60 7L57.500 10L57.500 14L53.500 12L49.500 12L51 8.500L50 5L53.500 5.500z" fill="#dc7cf0" />
          <circle cx="87" cy="4" r="3" fill="#f6a91c" /><circle cx="9" cy="20" r="2.800" fill="#66cfe0" />
          <path d="M26 26L45 19L60 17L76 11L86 16L97 12V34H26z" fill="#2e5962" />
          <path d="M8 34Q30 20 60 22L82 14L97 20V46H0Q2 36 8 34z" fill="#66830f" />
          <path d="M36 28Q60 20 97 22V30Q70 28 36 34z" fill="#8fae20" />
          <path d="M56 33L70 28L97 26V32L78 37L50 36z" fill="#54c4f5" />
          <path d="M22 34Q40 26 60 28Q40 34 30 42L14 40z" fill="#4c6b0d" />
          <path d="M5 46Q18 36 40 40L32 46z" fill="#57dff4" />
          <path d="M30 46Q50 34 97 38V46z" fill="#5d7d12" />
          <path d="M6 36Q26 30 42 36M28 32Q50 20 90 24M40 46Q60 38 97 42" fill="none" stroke="#dfe6c2" strokeWidth="1.600" />
        </svg>
      </div>
      <svg viewBox="0 0 20 20" className="ml-5 h-5 w-5 shrink-0"><circle cx="10" cy="10" r="8" fill="none" stroke="#fff" strokeWidth="2.600" /></svg>
      <svg viewBox="0 0 21 20" className="ml-[40px] h-5 w-[21px] shrink-0"><path d="M1 0V3.500H13V0M1 20V16.500H13V20M1 6H13V14H1zM18 0V5M18 11V20" fill="none" stroke="#fff" strokeWidth="1.300" /><rect x="16.500" y="6" width="3.500" height="3.500" fill="#fff" /></svg>
      <div className="ml-[25px] h-[26px] w-[4px] shrink-0 border-x border-[#50545d]" />
      <svg viewBox="0 0 29 30" className="ml-[26px] h-[30px] w-[29px] shrink-0"><path d="M8 6V1.500H21V6" fill="none" stroke="#1fa3e8" strokeWidth="2" /><path d="M0 6H29V25Q29 29.500 25 29.500H4Q0 29.500 0 25z" fill="#f4f4f4" /><path d="M9 12H14V17H9z" fill="#f1511b" /><path d="M15 12H20V17H15z" fill="#80cc28" /><path d="M9 18H14V23H9z" fill="#00adef" /><path d="M15 18H20V23H15z" fill="#fbbc09" /></svg>
      <Task ml="ml-[19px]" width="w-[118px]" icon={<Folder className="ml-[10px] mr-[11px] h-[26px] w-[18px]" />} t="guiapp" w={48} />
      <Task ml="ml-[11px]" width="w-[118px]" t="Facebook..." w={73} icon={
        <svg viewBox="0 0 28 29" className="ml-[6px] mr-[5px] h-[29px] w-7 shrink-0">
          <defs><linearGradient id="ff" x1=".8" y1="0" x2=".2" y2="1"><stop offset="0" stopColor="#ffe226" /><stop offset=".4" stopColor="#ff9320" /><stop offset=".75" stopColor="#ff3750" /><stop offset="1" stopColor="#e31587" /></linearGradient></defs>
          <path d="M2 8L4.500 5L6 8L9 7.500L13 9L16 4L18 0Q24 5 25 9Q30 17 25 23Q20 29 13.500 28.500Q5 28 1.500 21Q-1 14 2 8z" fill="url(#ff)" />
          <circle cx="14" cy="16" r="6.800" fill="#7b45d8" /><path d="M7 11Q12 9 16 12Q12 13 11 15Q8 14 7 11z" fill="#ff9a2b" />
        </svg>} />
      <svg viewBox="0 0 30 28" className="ml-[18px] h-7 w-[30px] shrink-0"><path d="M0 10L15 0L30 10V14H0z" fill="#0b5cab" /><path d="M1 10H29L15 22z" fill="#f2f6fa" /><path d="M0 9.500L15 19L0 28z" fill="#2196e3" /><path d="M0 28L15 18.500L30 9.500V28z" fill="#45b8f7" /><path d="M0 28L12 20.500L15 22.500L24 28z" fill="#2ba0ea" /></svg>
      <svg viewBox="0 0 28 28" className="ml-[25px] h-7 w-7 shrink-0"><circle cx="14" cy="14" r="13.500" fill="#b9b7b2" /><circle cx="14" cy="14" r="11" fill="#e6e4df" /><circle cx="14" cy="14" r="8.500" fill="none" stroke="#76746e" strokeWidth="2" strokeDasharray="1 2" /><path d="M10 8L18 20" stroke="#a3261c" strokeWidth="2" /></svg>
      <svg viewBox="0 0 30 30" className="ml-[25px] h-[30px] w-[30px] shrink-0">
        <defs><linearGradient id="eg" x1="0" x2="1"><stop offset="0" stopColor="#2aa5e2" /><stop offset="1" stopColor="#5ed361" /></linearGradient></defs>
        <path d="M.5 14Q2 1 15 .3Q28 0 29.800 12Q30 20 22 20Q16 20 17 16.500Q19 14 16 10.500Q9 7 .5 14z" fill="url(#eg)" />
        <path d="M.3 14Q4 7.500 12 8.500Q18 10 18 14Q12 12 10.500 18Q11 26 20 29Q15 31 9 28.500Q0 24 .3 14z" fill="#1577d0" /><path d="M12 14Q9 18 13 23Q19 27 28 22Q25 28 19 29.500Q10 28 9 20Q9 16 12 14z" fill="#11458e" />
      </svg>
      <Task ml="ml-[18px]" width="w-[117px]" t="mukesh@..." w={73} icon={
        <svg viewBox="0 0 30 30" className="ml-[4px] mr-[4px] h-[30px] w-[30px] shrink-0"><rect width="30" height="30" fill="#e95420" /><circle cx="15" cy="13" r="9.500" fill="#fff" /><circle cx="15" cy="13" r="4.600" fill="none" stroke="#e95420" strokeWidth="2" /><circle cx="9.500" cy="13" r="1.600" fill="#e95420" /><circle cx="18" cy="8" r="1.600" fill="#e95420" /><circle cx="18" cy="18" r="1.600" fill="#e95420" /><path d="M10 26.500H20" stroke="#f7b79e" strokeWidth="1.500" strokeDasharray="2 1" /></svg>} />
      <Task ml="ml-[11px]" width="w-[118px]" t="Bacteria ..." w={67} icon={<XLogo light className="ml-[5px] mr-[5px] h-[30px] w-[29px] shrink-0" />} />
      <Task ml="ml-[5px]" width="w-[127px]" active t="Selected ..." w={70} icon={<XLogo light className="ml-[9px] mr-[5px] h-[30px] w-[29px] shrink-0" />} />
      <div className="ml-[8px] flex h-[25px] w-[62px] shrink-0 items-center border-[3px] border-white bg-black">
        <div className="flex h-full w-[45px] items-center justify-end bg-[#169b47] text-[16.500px]"><T w={34} className="mr-px">82%</T></div>
      </div>
      <div className="h-[12px] w-[2px] shrink-0 bg-white" />
      <svg viewBox="0 0 11 18" className="ml-[8px] h-[18px] w-[11px] shrink-0"><path d="M2 0H4V5H7V0H9V5H11V9Q11 12 6.500 13V18H4.500V13Q0 12 0 9V5H2z" fill="#fff" /></svg>
      <svg viewBox="0 0 28 26" className="ml-[36px] -mt-[2px] h-[26px] w-7 shrink-0"><path d="M10 0Q18 4 15 12Q10 18 0 13Q10 10 10 0z" fill="#fbbf24" /><path d="M7 25Q1 24 2 19.500Q3 16 7 16Q10 9.500 16 11Q21 12 22 16Q28 16 28 21Q27 25 22 25z" fill="#dbe6f8" /><path d="M5 25Q2 23 3 20Q12 24 28 20Q28 25 22 25z" fill="#b8cdf0" /></svg>
      <T w={38} className="ml-[9px] mt-[2px] text-[17px]">25°C</T>
      <svg viewBox="0 0 17 10" className="ml-[21px] -mt-[2px] h-[10px] w-[17px] shrink-0"><path d="M1 9L8.500 1.500L16 9" fill="none" stroke="#fff" strokeWidth="1.400" /></svg>
      <svg viewBox="0 0 22 20" className="ml-[10px] -mt-px h-5 w-[22px] shrink-0"><path d="M12 17L1.500 18V4.500L20 1V10" fill="none" stroke="#fff" strokeWidth="1.400" /><path d="M6 9Q9 4 13 7M14 5V8.500H11M13 11Q10 15 6.500 12.500M6 15V11.500H9" fill="none" stroke="#fff" strokeWidth="1.300" /><circle cx="16.500" cy="15.200" r="4.600" fill="#2b78c8" /></svg>
      <div className="ml-[13px] flex w-[66px] shrink-0 flex-col items-center"><T w={52} className="leading-[23px]">7:41 PM</T><T w={60} className="leading-[23px]">9/5/2022</T></div>
      <svg viewBox="0 0 21 21" className="ml-[23px] h-[21px] w-[21px] shrink-0"><path d="M20 11V1H1V16.500H9" fill="none" stroke="#fff" strokeWidth="1.400" /><path d="M17 11Q18 17 10 17.500Q15 21.500 19 18Q21 14 17 11z" fill="none" stroke="#fff" strokeWidth="1.200" /></svg>
      <div className="ml-[24px] h-[50px] w-px shrink-0 bg-[#6c7078]" />
    </div>
  );
}

export default function App() {
  return (
    <div className="relative h-[1080px] w-[1920px] overflow-hidden bg-white font-['Open_Sans','Noto_Sans',sans-serif]">
      <div className="flex h-[1030px]">
        <Explorer />
        <div className="z-10 -ml-px flex h-[1030px] shadow-[0_0_14px_1px_rgba(0,0,0,0.45)]"><Finder /></div>
      </div>
      <Dialog />
      <div className="relative z-30"><Taskbar /></div>
    </div>
  );
}
